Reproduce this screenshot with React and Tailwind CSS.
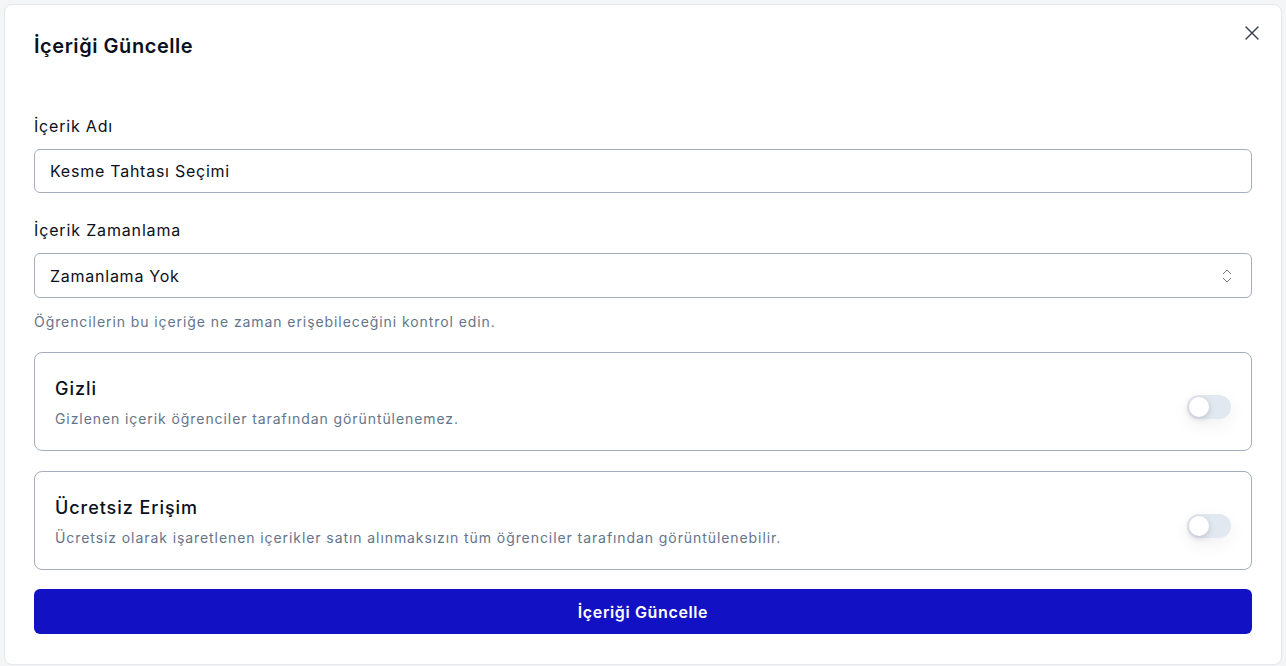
import React from "react";
import { X, ChevronsUpDown } from "lucide-react";

function Toggle() {
  return (
    <div className="w-11 h-6 rounded-full bg-[#e2e8f0] flex items-center px-[2px] shrink-0 mt-[10px] shadow-[0_6px_18px_rgba(15,23,42,0.06)]">
      <div className="w-5 h-5 rounded-full bg-white shadow-[0_2px_6px_rgba(15,23,42,0.18)]" />
    </div>
  );
}

function Card({ title, desc }) {
  return (
    <div className="flex items-center justify-between border border-[#a3adbb] rounded-lg pl-5 pr-5 py-[21.5px]">
      <div className="flex flex-col">
        <div className="text-[18px] leading-7 font-medium text-[#0b1020] tracking-[0.95px]">{title}</div>
        <div className="text-sm leading-5 text-[#64748b] mt-1.5 tracking-[0.92px]">{desc}</div>
      </div>
      <Toggle />
    </div>
  );
}

export default function App() {
  return (
    <div
      className="w-[1286px] h-[666px] bg-[#f4f5f7] p-1 overflow-hidden"
      style={{ fontFamily: "Inter, 'Noto Sans', sans-serif" }}
    >
      <div className="relative bg-white rounded-lg border border-[#e5e7eb] h-[661px] pt-[27px] px-[29px]">
        <button className="absolute right-[17px] top-[16px] text-[#374151]">
          <X size={24} strokeWidth={1.4} />
        </button>
        <h2 className="text-xl leading-7 font-semibold text-[#0b1020] tracking-[0.55px]">İçeriği Güncelle</h2>

        <div className="mt-[54px] text-base leading-6 text-[#0b1020] tracking-[0.8px]">İçerik Adı</div>
        <div className="mt-[11px] h-[44px] border border-[#a3adbb] rounded-md flex items-center px-[15px] text-base text-[#0b1020] tracking-[0.75px]">
          Kesme Tahtası Seçimi
        </div>

        <div className="mt-[25px] text-base leading-6 text-[#0b1020] tracking-[0.85px]">İçerik Zamanlama</div>
        <div className="mt-[11px] h-[45px] border border-[#a3adbb] rounded-md flex items-center justify-between pl-[15px] pr-[15px] text-base text-[#0b1020] tracking-[0.75px]">
          <span>Zamanlama Yok</span>
          <ChevronsUpDown size={18} strokeWidth={1.3} className="text-[#6b7280]" />
        </div>
        <div className="mt-[14px] text-sm leading-5 text-[#64748b] tracking-[0.92px]">
          Öğrencilerin bu içeriğe ne zaman erişebileceğini kontrol edin.
        </div>

        <div className="mt-5 flex flex-col gap-5">
          <Card title="Gizli" desc="Gizlenen içerik öğrenciler tarafından görüntülenemez." />
          <Card
            title="Ücretsiz Erişim"
            desc="Ücretsiz olarak işaretlenen içerikler satın alınmaksızın tüm öğrenciler tarafından görüntülenebilir."
          />
        </div>

        <button className="mt-[19px] w-full h-[45px] rounded-md bg-[#1212c4] text-white text-base font-semibold tracking-[0.63px]">
          İçeriği Güncelle
        </button>
      </div>
    </div>
  );
}
